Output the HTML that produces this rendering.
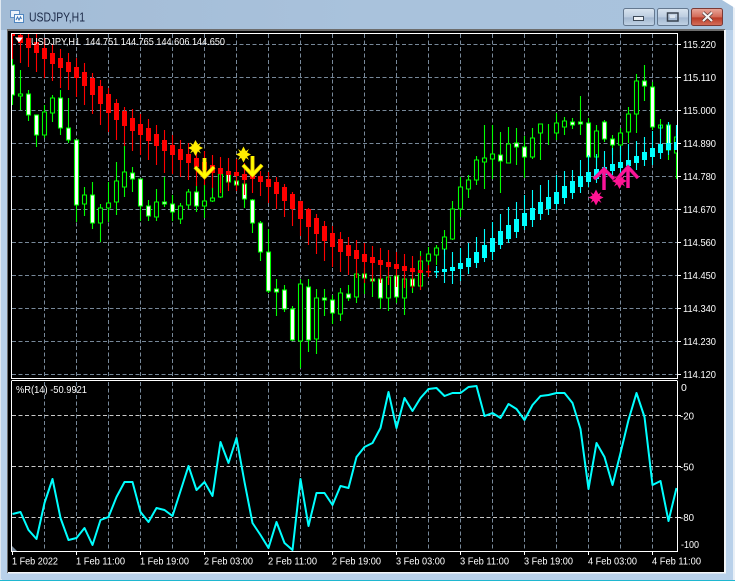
<!DOCTYPE html>
<html><head><meta charset="utf-8"><title>USDJPY,H1</title>
<style>
html,body{margin:0;padding:0;background:#fff;width:735px;height:581px;overflow:hidden}
svg{display:block;position:absolute;left:0;top:0}
text{font-family:"Liberation Sans",sans-serif}
</style></head><body>
<svg width="735" height="581" viewBox="0 0 735 581" xmlns="http://www.w3.org/2000/svg">
<defs>
<linearGradient id="bg" x1="0" y1="0" x2="1" y2="0"><stop offset="0" stop-color="#a3bcd6"/><stop offset=".5" stop-color="#a9c2dc"/><stop offset="1" stop-color="#a9c3dd"/></linearGradient>
<linearGradient id="btn" x1="0" y1="0" x2="0" y2="1"><stop offset="0" stop-color="#d9e4ef"/><stop offset=".5" stop-color="#bccde0"/><stop offset=".55" stop-color="#a3b8d0"/><stop offset="1" stop-color="#c2d4e6"/></linearGradient>
<linearGradient id="cls" x1="0" y1="0" x2="0" y2="1"><stop offset="0" stop-color="#e9a89c"/><stop offset=".5" stop-color="#d36a58"/><stop offset=".55" stop-color="#b93a26"/><stop offset="1" stop-color="#d5705c"/></linearGradient>
<clipPath id="m"><rect x="12" y="34" width="665" height="344"/></clipPath>
<clipPath id="s"><rect x="12" y="382" width="665" height="169"/></clipPath>
</defs>
<rect x="0" y="0" width="735" height="581" rx="5" fill="#b9d1ea"/>
<rect x="0" y="0" width="735" height="30" fill="url(#bg)"/>
<rect x="0" y="0" width="1" height="581" fill="#dfe8f1"/>
<rect x="733" y="0" width="2" height="581" fill="#e8eff6"/>
<rect x="0" y="580" width="735" height="1" fill="#1fb7d0"/>
<path d="M722 0L735 8V0z" fill="#fff"/>
<rect x="7" y="29" width="718" height="544" fill="#6d6d6d"/>
<rect x="8" y="31" width="716" height="541" fill="#000"/>
<rect x="8" y="572" width="718" height="1.5" fill="#f2f5f8"/>
<rect x="724" y="30" width="2" height="543" fill="#f2f5f8"/>

<!-- title -->
<g>
<rect x="10.5" y="10.5" width="9" height="7" fill="#eaf2fa" stroke="#5f8fc4"/>
<rect x="14.5" y="14.5" width="9" height="8" fill="#f4f8fc" stroke="#4f86c0"/>
<path d="M16 20l1.5-3 1.5 3 1.5-3 1 2" fill="none" stroke="#3b74b4" stroke-width="1"/>
</g>
<text x="29" y="21.5" font-size="12.5" fill="#1c2a48" textLength="56" lengthAdjust="spacingAndGlyphs">USDJPY,H1</text>

<!-- buttons -->
<rect x="623.5" y="8.5" width="31" height="17" rx="2" fill="url(#btn)" stroke="#64788f"/>
<rect x="633.5" y="16.5" width="10" height="4" fill="#eef2f6" stroke="#3e4a58"/>
<rect x="657.5" y="8.5" width="31" height="17" rx="2" fill="url(#btn)" stroke="#64788f"/>
<rect x="667.5" y="13" width="10.5" height="8" fill="none" stroke="#38424f" stroke-width="1.5"/>
<rect x="670" y="15" width="5" height="3" fill="#dbe5ef"/>
<rect x="691.5" y="8.5" width="31" height="17" rx="2" fill="url(#cls)" stroke="#7a3a36"/>
<path d="M703 12.5l9 8.5M712 12.5l-9 8.5" stroke="#47302e" stroke-width="3.4"/>
<path d="M703 12.5l9 8.5M712 12.5l-9 8.5" stroke="#f6f3f2" stroke-width="2.2"/>

<!-- main grid -->
<g stroke="#778899" stroke-width="1" stroke-dasharray="4 2.5" fill="none">
<path d="M12 44.5H677M12 77.5H677M12 110.5H677M12 143.5H677M12 176.5H677M12 209.5H677M12 242.5H677M12 275.5H677M12 308.5H677M12 341.5H677M12 374.5H677"/>
<path d="M44.5 34V378M76.5 34V378M108.5 34V378M140.5 34V378M172.5 34V378M204.5 34V378M236.5 34V378M268.5 34V378M300.5 34V378M332.5 34V378M364.5 34V378M396.5 34V378M428.5 34V378M460.5 34V378M492.5 34V378M524.5 34V378M556.5 34V378M588.5 34V378M620.5 34V378M652.5 34V378"/>
</g>

<g clip-path="url(#m)">
<!-- green wicks -->
<path fill="none" stroke="#00ff00" stroke-width="1.1" d="M12.5 59V105M20.5 70V110M28.5 90V121M36.5 115V147M44.5 105V138M52.5 95V122M60.5 90V135M68.5 98V143M76.5 140V222M84.5 187V216M92.5 182V229M100.5 204V242M108.5 182V222M116.5 162V215M124.5 146V197M132.5 167V192M140.5 179V221M148.5 200V221M156.5 189V221M164.5 177V207M172.5 195V221M180.5 203V224M188.5 189V209M196.5 182V212M204.5 185V218M212.5 187V202M220.5 172V198M228.5 170V186M236.5 174V190M244.5 173V208M252.5 199V233M260.5 221V261M268.5 229V293M276.5 279V316M284.5 285V312M292.5 306V341M300.5 279V368M308.5 279V352M316.5 289V354M324.5 289V316M332.5 295V324M340.5 288V321M348.5 285V301M356.5 270V303M364.5 268V294M372.5 275V297M380.5 270V309M388.5 272V311M396.5 270V303M404.5 274V315M412.5 272V293M420.5 251V290M428.5 247V266M436.5 245V265M444.5 230V255M452.5 201V240M460.5 177V217M468.5 175V198M476.5 156V185M484.5 125V189M492.5 125V179M500.5 132V193M508.5 127V163M516.5 128V165M524.5 136V178M532.5 128V159M540.5 128V160M548.5 124V145M556.5 113V140M564.5 117V135M572.5 118V129M580.5 96V135M588.5 118V157M596.5 125V167M604.5 120V142M612.5 135V155M620.5 128V155M628.5 107V143M636.5 74V133M644.5 65V101M652.5 82V130M660.5 119V135M668.5 122V160M676.5 125V179"/>
<!-- white bodies -->
<path fill="#fff" stroke="#00ff00" stroke-width="1.1" d="M10.5 65h4v30h-4zM26.5 94h4v21h-4zM34.5 115h4v20h-4zM58.5 98h4v30h-4zM66.5 128h4v12h-4zM74.5 140h4v65h-4zM90.5 195h4v28h-4zM130.5 173h4v6h-4zM138.5 179h4v27h-4zM146.5 206h4v10h-4zM162.5 202h4v2h-4zM170.5 204h4v8h-4zM194.5 192h4v14h-4zM226.5 174h4v8h-4zM234.5 181h4v4h-4zM242.5 184h4v15h-4zM250.5 200h4v23h-4zM258.5 223h4v29h-4zM266.5 252h4v39h-4zM274.5 289h4v3h-4zM282.5 290h4v19h-4zM290.5 309h4v31h-4zM306.5 287h4v53h-4zM322.5 298h4v2h-4zM330.5 300h4v13h-4zM346.5 294h4v4h-4zM362.5 274h4v4h-4zM370.5 279h4v2h-4zM378.5 279h4v19h-4zM394.5 276h4v21h-4zM410.5 279h4v7h-4zM498.5 155h4v6h-4zM514.5 143h4v4h-4zM522.5 147h4v10h-4zM570.5 122h4v3h-4zM578.5 122h4v2h-4zM586.5 123h4v34h-4zM602.5 122h4v17h-4zM610.5 139h4v6h-4zM642.5 81h4v5h-4zM650.5 87h4v40h-4zM666.5 125h4v25h-4z"/>
<!-- hollow bodies -->
<path fill="#000" stroke="#00ff00" stroke-width="1.1" d="M18.5 94h4v2h-4zM42.5 112h4v23h-4zM50.5 98h4v15h-4zM82.5 195h4v9h-4zM98.5 208h4v15h-4zM106.5 203h4v5h-4zM114.5 181h4v21h-4zM122.5 172h4v15h-4zM154.5 202h4v15h-4zM178.5 206h4v13h-4zM186.5 192h4v13h-4zM202.5 201h4v5h-4zM210.5 198h4v3h-4zM218.5 174h4v23h-4zM298.5 284h4v57h-4zM314.5 298h4v41h-4zM338.5 293h4v21h-4zM354.5 274h4v23h-4zM386.5 277h4v21h-4zM402.5 279h4v19h-4zM418.5 261h4v25h-4zM426.5 254h4v7h-4zM434.5 248h4v7h-4zM442.5 237h4v12h-4zM450.5 209h4v30h-4zM458.5 187h4v22h-4zM466.5 180h4v9h-4zM474.5 160h4v20h-4zM482.5 158h4v4h-4zM490.5 154h4v5h-4zM506.5 144h4v19h-4zM530.5 138h4v19h-4zM538.5 124h4v9h-4zM554.5 123h4v10h-4zM562.5 121h4v6h-4zM594.5 131h4v26h-4zM618.5 133h4v12h-4zM626.5 114h4v18h-4zM634.5 81h4v33h-4zM658.5 125h4v3h-4zM674.5 137h4v16h-4z"/>

<!-- red -->
<path fill="none" stroke="#ff0000" stroke-width="1.1" d="M12.5 34V59M20.5 34V63M28.5 34V67M36.5 34V72M44.5 38V78M52.5 44V81M60.5 49V88M68.5 53V90M76.5 58V97M84.5 63V105M92.5 73V114M100.5 80V125M108.5 88V132M116.5 99V140M124.5 107V146M132.5 109V151M140.5 114V155M148.5 119V160M156.5 125V165M164.5 130V173M172.5 135V174M180.5 140V177M188.5 143V180M196.5 148V186M204.5 151V185M212.5 155V188M220.5 157V193M228.5 158V191M236.5 159V191M244.5 163V195M252.5 163V193M260.5 171V196M268.5 172V203M276.5 177V209M284.5 184V217M292.5 192V226M300.5 201V236M308.5 208V245M316.5 214V254M324.5 221V261M332.5 226V267M340.5 232V272M348.5 237V275M356.5 240V278M364.5 243V283M372.5 246V282M380.5 248V283M388.5 250V285M396.5 252V287M404.5 254V288M412.5 256V288M420.5 256V290M428.5 265V277"/>
<path fill="#ff0000" d="M10 34h5v2h-5zM18 35h5v8h-5zM26 38h5v10h-5zM34 42h5v11h-5zM42 48h5v11h-5zM50 53h5v11h-5zM58 58h5v10h-5zM66 62h5v10h-5zM74 67h5v11h-5zM82 72h5v14h-5zM90 78h5v17h-5zM98 86h5v18h-5zM106 94h5v19h-5zM114 103h5v17h-5zM122 111h5v15h-5zM130 118h5v13h-5zM138 124h5v11h-5zM146 128h5v13h-5zM154 134h5v12h-5zM162 140h5v11h-5zM170 145h5v10h-5zM178 149h5v11h-5zM186 154h5v9h-5zM194 158h5v9h-5zM202 162h5v8h-5zM210 165h5v8h-5zM218 168h5v6h-5zM226 171h5v4h-5zM234 172h5v4h-5zM242 174h5v6h-5zM250 175h5v4h-5zM258 176h5v6h-5zM266 179h5v8h-5zM274 182h5v12h-5zM282 187h5v14h-5zM290 194h5v15h-5zM298 201h5v18h-5zM306 209h5v18h-5zM314 218h5v16h-5zM322 226h5v15h-5zM330 233h5v14h-5zM338 239h5v13h-5zM346 245h5v11h-5zM354 250h5v9h-5zM362 254h5v8h-5zM370 257h5v6h-5zM378 260h5v5h-5zM386 262h5v5h-5zM394 264h5v5h-5zM402 266h5v5h-5zM410 268h5v4h-5zM418 270h5v3h-5zM426 271h5v1.5h-5z"/>

<!-- cyan -->
<path fill="none" stroke="#00ffff" stroke-width="1.1" d="M436.5 266V278M444.5 249V283M452.5 252V284M460.5 248V281M468.5 243V274M476.5 237V268M484.5 229V262M492.5 222V260M500.5 214V249M508.5 207V243M516.5 202V238M524.5 195V230M532.5 190V227M540.5 185V220M548.5 180V215M556.5 175V210M564.5 171V204M572.5 170V199M580.5 160V193M588.5 155V187M596.5 154V183M604.5 151V180M612.5 148V175M620.5 146V175M628.5 144V170M636.5 141V170M644.5 137V166M652.5 131V165M660.5 125V159M668.5 122V155M676.5 125V150"/>
<path fill="#00ffff" d="M434 271h5v1.5h-5zM442 269h5v3h-5zM450 267h5v4h-5zM458 263h5v6h-5zM466 258h5v9h-5zM474 252h5v11h-5zM482 245h5v13h-5zM490 238h5v14h-5zM498 231h5v14h-5zM506 225h5v14h-5zM514 219h5v13h-5zM522 213h5v13h-5zM530 208h5v12h-5zM538 202h5v12h-5zM546 197h5v12h-5zM554 192h5v12h-5zM562 186h5v12h-5zM570 181h5v12h-5zM578 176h5v11h-5zM586 172h5v10h-5zM594 169h5v10h-5zM602 167h5v8h-5zM610 164h5v7h-5zM618 162h5v6h-5zM626 160h5v6h-5zM634 156h5v7h-5zM642 152h5v8h-5zM650 148h5v9h-5zM658 144h5v9h-5zM666 143h5v7h-5zM674 142h5v8h-5z"/>

<!-- yellow stars -->
<path transform="translate(195.5 148)" fill="#ffee00" d="M0-8L2.4-3.4L5.5-5.5L3.6-2L7.5 0L3.6 2L5.5 5.5L2.4 3.4L0 8L-2.4 3.4L-5.5 5.5L-3.6 2L-7.5 0L-3.6-2L-5.5-5.500L-2.4-3.4z"/>
<path transform="translate(243.5 154.5)" fill="#ffee00" d="M0-8L2.4-3.4L5.5-5.5L3.6-2L7.5 0L3.6 2L5.5 5.5L2.4 3.4L0 8L-2.4 3.4L-5.5 5.5L-3.6 2L-7.5 0L-3.6-2L-5.5-5.500L-2.4-3.4z"/>
<!-- yellow arrows -->
<g fill="none">
<path stroke="#e8b400" stroke-width="4" d="M204.5 158V176M195 167L204.5 177L214 167"/>
<path stroke="#ffff00" stroke-width="2.6" d="M204.5 158V176M195 167L204.5 177L214 167"/>
<path stroke="#e8b400" stroke-width="4" d="M252.5 156V174M243 165L252.5 175L262 165"/>
<path stroke="#ffff00" stroke-width="2.6" d="M252.5 156V174M243 165L252.5 175L262 165"/>
</g>
<!-- pink -->
<path transform="translate(596 197.5)" fill="#ff1493" d="M0-8L2.4-3.4L5.5-5.5L3.6-2L7.5 0L3.6 2L5.5 5.5L2.4 3.4L0 8L-2.4 3.4L-5.5 5.5L-3.6 2L-7.5 0L-3.6-2L-5.5-5.500L-2.4-3.4z"/>
<path transform="translate(619.5 181)" fill="#ff1493" d="M0-8L2.4-3.4L5.5-5.5L3.6-2L7.5 0L3.6 2L5.5 5.5L2.4 3.4L0 8L-2.4 3.4L-5.5 5.5L-3.6 2L-7.5 0L-3.6-2L-5.5-5.500L-2.4-3.4z"/>
<g fill="none">
<path stroke="#c8109a" stroke-width="3.6" d="M604 170V190M594 179L604 169L614 179"/>
<path stroke="#ff1493" stroke-width="2.6" d="M604 170V190M594 179L604 169L614 179"/>
<path stroke="#c8109a" stroke-width="3.6" d="M628 168V188M618 178L628 167L638 178"/>
<path stroke="#ff1493" stroke-width="2.6" d="M628 168V188M618 178L628 167L638 178"/>
</g>
</g>

<!-- frames -->
<path fill="none" stroke="#fff" stroke-width="1" d="M11.5 33.5H677.5V378.5H11.5zM11.5 381V551.5H677.5V381M11.5 380.5H677.5"/>

<!-- price ticks + labels -->
<path stroke="#fff" d="M678 44.5h3M678 77.5h3M678 110.5h3M678 143.5h3M678 176.5h3M678 209.5h3M678 242.5h3M678 275.5h3M678 308.5h3M678 341.5h3M678 374.5h3"/>
<g font-size="10.5" fill="#fff">
<text x="683" y="48" textLength="33" lengthAdjust="spacingAndGlyphs">115.220</text>
<text x="683" y="81" textLength="33" lengthAdjust="spacingAndGlyphs">115.110</text>
<text x="683" y="114" textLength="33" lengthAdjust="spacingAndGlyphs">115.000</text>
<text x="683" y="147" textLength="33" lengthAdjust="spacingAndGlyphs">114.890</text>
<text x="683" y="180" textLength="33" lengthAdjust="spacingAndGlyphs">114.780</text>
<text x="683" y="213" textLength="33" lengthAdjust="spacingAndGlyphs">114.670</text>
<text x="683" y="246" textLength="33" lengthAdjust="spacingAndGlyphs">114.560</text>
<text x="683" y="279" textLength="33" lengthAdjust="spacingAndGlyphs">114.450</text>
<text x="683" y="312" textLength="33" lengthAdjust="spacingAndGlyphs">114.340</text>
<text x="683" y="345" textLength="33" lengthAdjust="spacingAndGlyphs">114.230</text>
<text x="683" y="378" textLength="33" lengthAdjust="spacingAndGlyphs">114.120</text>
<text x="31" y="45" textLength="194" lengthAdjust="spacingAndGlyphs" xml:space="preserve">USDJPY,H1  144.751 144.765 144.606 144.650</text>
</g>
<path d="M15 37.5h8l-4 5z" fill="#fff"/>

<!-- sub grid -->
<g stroke="#778899" stroke-width="1" stroke-dasharray="4 2.5" fill="none">
<path d="M44.5 382V551M76.5 382V551M108.5 382V551M140.5 382V551M172.5 382V551M204.5 382V551M236.5 382V551M268.5 382V551M300.5 382V551M332.5 382V551M364.5 382V551M396.5 382V551M428.5 382V551M460.5 382V551M492.5 382V551M524.5 382V551M556.5 382V551M588.5 382V551M620.5 382V551M652.5 382V551"/>
</g>
<g stroke="#c8c8c8" stroke-width="1" stroke-dasharray="4 2.5" fill="none">
<path d="M12 415.5H677M12 466.5H677M12 517.5H677"/>
</g>
<path d="M12 546L17 551H12z" fill="#778899"/>
<g clip-path="url(#s)">
<path fill="none" stroke="#00ffff" stroke-width="2" stroke-linejoin="round" d="M12.5 514L20.5 512L28.5 530L36.5 539L44.5 503L52.5 479L60.5 518L68.5 540L76.5 538L84.5 528L92.5 545L100.5 520L108.5 517L116.5 497L124.5 482L132.5 482L140.5 512L148.5 522L156.5 508L164.5 510L172.5 516L180.5 491L188.5 466L196.5 490L204.5 482L212.5 496L220.5 442L228.5 463L236.5 438L244.5 482L252.5 523L260.5 535L268.5 548L276.5 522L284.5 543L292.5 550L300.5 479L308.5 526L316.5 493L324.5 493L332.5 505L340.5 486L348.5 488L356.5 457L364.5 447L372.5 443L380.5 428L388.5 392L396.5 428L404.5 398L412.5 411L420.5 398L428.5 389L436.5 388L444.5 396L452.5 393L460.5 393L468.5 387L476.5 386L484.5 416L492.5 413L500.5 418L508.5 404L516.5 409L524.5 420L532.5 405L540.5 396L548.5 395L556.5 393L564.5 393L572.5 403L580.5 429L588.5 489L596.5 443L604.5 457L612.5 485L620.5 453L628.5 420L636.5 393L644.5 417L652.5 485L660.5 481L668.5 521L676.5 488"/>
</g>

<!-- sub labels -->
<path stroke="#fff" d="M678 415.5h3M678 466.5h3M678 517.5h3M12.5 551v4M76.5 551v4M140.5 551v4M204.5 551v4M268.5 551v4M332.5 551v4M396.5 551v4M460.5 551v4M524.5 551v4M588.5 551v4M652.5 551v4"/>
<g font-size="10.5" fill="#fff">
<text x="16" y="393" textLength="71" lengthAdjust="spacingAndGlyphs">%R(14) -50.9921</text>
<text x="681" y="391">0</text>
<text x="680" y="419.5" textLength="14" lengthAdjust="spacingAndGlyphs">-20</text>
<text x="680" y="470.5" textLength="14" lengthAdjust="spacingAndGlyphs">-50</text>
<text x="680" y="521" textLength="14" lengthAdjust="spacingAndGlyphs">-80</text>
<text x="681" y="548" textLength="18" lengthAdjust="spacingAndGlyphs">-100</text>
<text x="12" y="564.5" textLength="46" lengthAdjust="spacingAndGlyphs">1 Feb 2022</text>
<text x="76" y="564.5" textLength="49" lengthAdjust="spacingAndGlyphs">1 Feb 11:00</text>
<text x="140" y="564.5" textLength="49" lengthAdjust="spacingAndGlyphs">1 Feb 19:00</text>
<text x="204" y="564.5" textLength="49" lengthAdjust="spacingAndGlyphs">2 Feb 03:00</text>
<text x="268" y="564.5" textLength="49" lengthAdjust="spacingAndGlyphs">2 Feb 11:00</text>
<text x="332" y="564.5" textLength="49" lengthAdjust="spacingAndGlyphs">2 Feb 19:00</text>
<text x="396" y="564.5" textLength="49" lengthAdjust="spacingAndGlyphs">3 Feb 03:00</text>
<text x="460" y="564.5" textLength="49" lengthAdjust="spacingAndGlyphs">3 Feb 11:00</text>
<text x="524" y="564.5" textLength="49" lengthAdjust="spacingAndGlyphs">3 Feb 19:00</text>
<text x="588" y="564.5" textLength="49" lengthAdjust="spacingAndGlyphs">4 Feb 03:00</text>
<text x="652" y="564.5" textLength="49" lengthAdjust="spacingAndGlyphs">4 Feb 11:00</text>
</g>
</svg>
</body></html>
